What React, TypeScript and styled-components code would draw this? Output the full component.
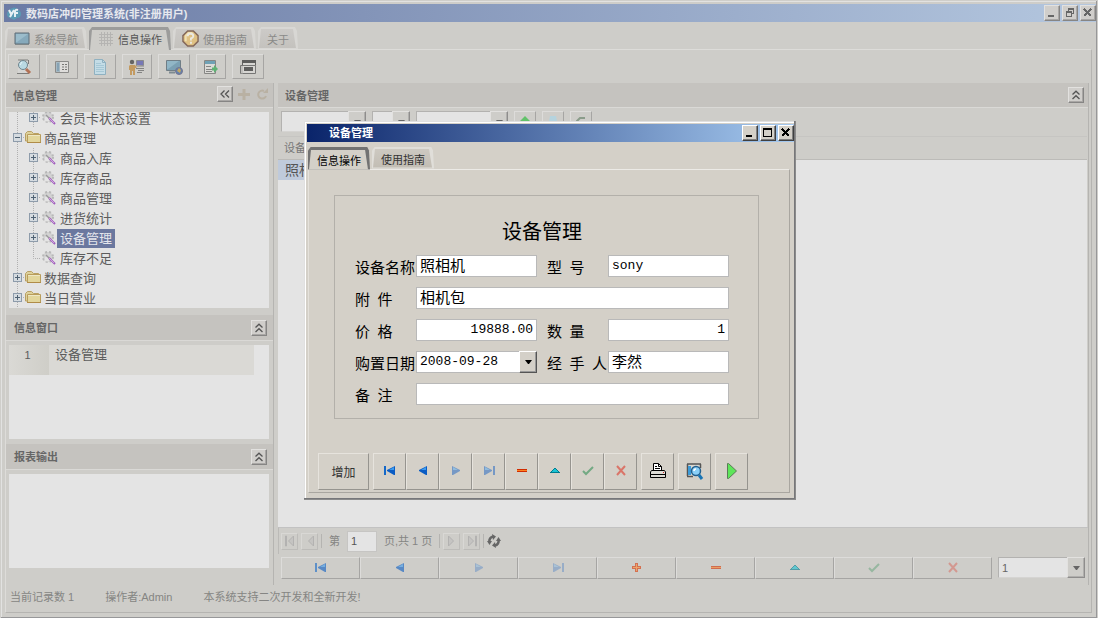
import React from 'react';
import styled, { createGlobalStyle, css } from 'styled-components';

const GlobalStyle = createGlobalStyle`
  *, *::before, *::after { box-sizing: border-box; }
  body {
    margin: 0;
    font-family: "Liberation Sans", "Noto Sans CJK SC", sans-serif;
    font-size: 11px;
    line-height: 16px;
    color: #666;
  }
  button, input, select { font-family: inherit; font-size: inherit; color: inherit; margin: 0; }
  h1, h2, h3, ul { margin: 0; padding: 0; font-weight: normal; }
  ul { list-style: none; }
  svg { display: block; flex: none; }
`;

/* ---------- main window ---------- */

const Desktop = styled.div`
  position: relative;
  min-height: 100vh;
`;

const Shell = styled.div`
  display: flex;
  flex-direction: column;
  min-height: 100vh;
  padding: 4px 2px 6px 4px;
  background: #cecdc9;
  box-shadow: inset 0 0 0 1px #cfceca, inset -2px -2px 0 #979799, inset 2px 2px 0 #e2e2e1;
`;

const TitleBar = styled.header<{ $active?: boolean }>`
  display: flex;
  align-items: center;
  height: 18px;
  gap: 4px;
  padding-left: ${p => (p.$active ? 22 : 2)}px;
  background: ${p =>
    p.$active
      ? 'linear-gradient(90deg, #0a246a, #a6caf0)'
      : 'linear-gradient(90deg, #6b7ba5, #b4c7df)'};
  color: ${p => (p.$active ? '#fff' : '#e6e8ee')};
`;

const WindowTitle = styled.h1`
  flex: 1;
  padding-top: 1px;
  font-size: 11px;
  font-weight: bold;
  line-height: 16px;
`;

const ControlGroup = styled.div`
  display: flex;
  gap: 2px;
`;

const ControlButton = styled.button<{ $active?: boolean }>`
  display: grid;
  place-items: center;
  width: 16px;
  height: 16px;
  padding: 0;
  border: 1px solid;
  border-color: ${p => (p.$active ? '#fff #404040 #404040 #fff' : '#e2e1df #868584 #868584 #e2e1df')};
  background: ${p => (p.$active ? '#d4d0c8' : '#d0cecb')};
  box-shadow: inset -1px -1px 0 ${p => (p.$active ? '#808080' : '#a9a7a5')};
  color: ${p => (p.$active ? '#000' : '#666')};
`;

const Tabs = styled.nav<{ $dialog?: boolean }>`
  display: flex;
  align-items: flex-end;
  gap: 2px;
  height: 27px;
  padding-left: 1px;
`;

const Tab = styled.button<{ $selected?: boolean; $dialog?: boolean }>`
  position: relative;
  isolation: isolate;
  display: flex;
  align-items: center;
  justify-content: center;
  gap: 4px;
  height: ${p => (p.$selected ? 23 : 22)}px;
  margin-bottom: ${p => (p.$selected ? -1 : 0)}px;
  padding: ${p => (p.$dialog ? 3 : 1)}px 9px 0;
  border: 0;
  background: none;
  white-space: nowrap;
  color: ${p => (p.$dialog ? (p.$selected ? '#000' : '#333') : p.$selected ? '#555' : '#8a8a88')};
  &::before, &::after { content: ''; position: absolute; z-index: -1; }
  &::before {
    inset: 0;
    background: ${p => (p.$selected ? (p.$dialog ? '#727272' : '#9c9c9b') : p.$dialog ? '#e0ded9' : '#d8d7d4')};
    clip-path: polygon(0 100%, 0 4px, 3px 0, calc(100% - 3px) 0, calc(100% - 1px) 4px, 100% 100%);
  }
  &::after {
    inset: ${p => (p.$selected ? '3px 2px 0 1px' : '2px 2px 1px 1px')};
    background: ${p =>
      p.$selected ? (p.$dialog ? '#d4d0c8' : '#cecdc9') : p.$dialog ? 'linear-gradient(#cdc9c1, #c2bdb4)' : 'linear-gradient(#cccac7, #c4c2be)'};
    clip-path: polygon(0 100%, 2px 0, calc(100% - 3px) 0, 100% 100%);
  }
`;

const Frame = styled.div`
  display: flex;
  flex: 1;
  flex-direction: column;
  margin: 0 4px 0 1px;
  border: 1px solid;
  border-color: #dddcd9 #b5b4b1 #b5b4b1 #dddcd9;
`;

const Toolbar = styled.div`
  display: flex;
  gap: 6px;
  padding: 4px 2px;
`;

const ToolButton = styled.button<{ $narrow?: boolean }>`
  display: grid;
  place-items: center;
  width: ${p => (p.$narrow ? 30 : 32)}px;
  height: 25px;
  padding: 0;
  border: 1px solid;
  border-color: #dddcda #a6a5a3 #a6a5a3 #dddcda;
  background: #cecdc9;
`;

const Body = styled.main`
  display: grid;
  flex: 1;
  grid-template-columns: 268px minmax(0, 1fr);
  gap: 4px;
  padding-right: 2px;
`;

const Side = styled.aside`
  display: flex;
  flex-direction: column;
  border-right: 1px solid #b5b4b1;
  padding-bottom: 17px;
`;

const PanelHeader = styled.div<{ $tall?: boolean }>`
  display: flex;
  align-items: center;
  justify-content: space-between;
  height: ${p => (p.$tall ? 26 : 25)}px;
  padding: ${p => (p.$tall ? '0 6px 0 8px' : '0 4px 0 7px')};
  border-bottom: 1px solid #dad9d6;
  background: #c5c3bf;
`;

const PanelTitle = styled.h2`
  padding-top: 1px;
  font-size: 11px;
  font-weight: bold;
  line-height: 16px;
  color: #666;
`;

const HeaderTools = styled.div`
  display: flex;
  align-items: center;
  gap: 4px;
  margin-bottom: 2px;
`;

const HeaderIcon = styled.button`
  display: grid;
  place-items: center;
  width: 14px;
  height: 14px;
  padding: 0;
  border: 0;
  background: none;
`;

const PanelBox = styled.div<{ $fill?: boolean }>`
  ${p => (p.$fill ? css`flex: 1;` : css`height: 94px;`)}
  overflow: hidden;
  margin: ${p => (p.$fill ? '4px 4px 7px 3px' : '4px 4px 5px 3px')};
  background: #e4e4e4;
  &:last-child { margin-bottom: 0; }
`;

const Tree = styled.ul`
  margin-top: -4px;
`;

const TreeRow = styled.li`
  display: flex;
  align-items: center;
  height: 20px;
`;

const TreeLabel = styled.span<{ $selected?: boolean }>`
  padding: 0 3px;
  font-size: 13px;
  line-height: 19px;
  color: ${p => (p.$selected ? '#e4e6ec' : '#5c5c5c')};
  background: ${p => (p.$selected ? '#6b789f' : 'transparent')};
`;

const InfoTable = styled.table`
  width: 245px;
  border-collapse: collapse;
  font-size: 13px;
  color: #5c5c5c;
  background: #dad9d5;
`;

const InfoCell = styled.td`
  height: 30px;
  padding: 2px 6px;
  vertical-align: top;
`;

const InfoIndex = styled(InfoCell)`
  width: 40px;
  font-size: 11px;
  padding-right: 9px;
  text-align: center;
  background: linear-gradient(90deg, #dad9d5, #cfcec8);
`;

const Content = styled.section`
  display: flex;
  flex-direction: column;
  border-right: 1px solid #b5b4b1;
`;

const FilterBar = styled.div`
  display: flex;
  gap: 6px;
  height: 28px;
  padding: 3px 3px 4px;
`;

const SelectWrap = styled.span<{ $w: number; $dialog?: boolean }>`
  display: grid;
  flex: none;
  width: ${p => (p.$w ? p.$w + 'px' : 'auto')};
  height: ${p => (p.$dialog ? 22 : 21)}px;
`;

const Select = styled.select<{ $dialog?: boolean }>`
  grid-area: 1 / 1;
  min-width: 0;
  width: 100%;
  padding: ${p => (p.$dialog ? '0 18px 1px 3px' : '0 18px 0 3px')};
  border: 1px solid;
  border-radius: 0;
  border-color: ${p => (p.$dialog ? '#b9b9b9' : '#b3b2b0 #d5d4d2 #d5d4d2 #b3b2b0')};
  background: ${p => (p.$dialog ? '#fff' : '#e4e4e4')};
  color: ${p => (p.$dialog ? '#000' : '#666')};
  appearance: none;
  ${p => p.$dialog && css`font-family: "Liberation Mono", monospace; font-size: 13px;`}
`;

const SelectArrow = styled.span<{ $dialog?: boolean }>`
  grid-area: 1 / 1;
  justify-self: end;
  display: grid;
  place-items: center;
  width: 18px;
  pointer-events: none;
  border: 1px solid;
  border-color: ${p => (p.$dialog ? '#fff #555 #555 #fff' : '#e2e1df #8e8d8c #8e8d8c #e2e1df')};
  background: ${p => (p.$dialog ? '#d4d0c8' : '#cecdc9')};
  box-shadow: inset -1px -1px 0 ${p => (p.$dialog ? '#999' : '#b0afad')};
  color: ${p => (p.$dialog ? '#000' : '#666')};
`;

const FilterButton = styled(ToolButton)`
  width: 22px;
  height: 21px;
`;

const GridArea = styled.div`
  flex: 1;
  margin-right: 1px;
  background: #e4e4e4;
`;

const DataTable = styled.table`
  width: 100%;
  border-collapse: collapse;
`;

const HeadCell = styled.th`
  height: 23px;
  padding: 0 6px;
  text-align: left;
  font-weight: normal;
  color: #777;
  background: #cecdc9;
  border-top: 1px solid #c6c5c2;
  border-bottom: 1px solid #bcbbb8;
`;

const DataCell = styled.td<{ $selected?: boolean }>`
  width: 100px;
  height: 20px;
  padding: 0 7px;
  font-size: 14px;
  line-height: 18px;
  color: #555;
  background: ${p => (p.$selected ? '#bfcadb' : 'transparent')};
`;

const Pager = styled.div`
  display: flex;
  align-items: center;
  gap: 3px;
  height: 27px;
  padding: 0 2px;
  border-top: 1px solid #c2c2c2;
  border-left: 1px solid #bbbab7;
  font-size: 11px;
  color: #858583;
`;

const PagerButton = styled(ToolButton)`
  width: 17px;
  height: 17px;
  border-color: #d9d8d5 #bdbcb9 #bdbcb9 #d9d8d5;
`;

const Divider = styled.span`
  width: 1px;
  height: 14px;
  background: #b5b4b1;
`;

const PageLabel = styled.label`
  display: flex;
  align-items: center;
  gap: 7px;
  padding: 0 4px;
`;

const PageInput = styled.input`
  width: 30px;
  height: 21px;
  padding: 0 3px 1px;
  border: 1px solid #c6c5c3;
  background: #e4e4e4;
  color: #555;
`;

const NavBar = styled.div`
  display: flex;
  gap: 6px;
  padding: 3px 3px 6px;
`;

const NavGroup = styled.div`
  display: grid;
  flex: 1;
  grid-template-columns: repeat(9, minmax(0, 1fr));
`;

const NavButton = styled(ToolButton)`
  width: auto;
  height: 22px;
`;

const StatusBar = styled.footer`
  display: flex;
  gap: 31px;
  height: 27px;
  padding: 4px 4px 0;
  color: #858583;
`;

const Faded = styled.span<{ $disabled?: boolean }>`
  opacity: ${p => (p.$disabled ? 0.32 : 0.6)};
`;

/* ---------- dialog ---------- */

const Overlay = styled.div`
  position: absolute;
  inset: 0;
  display: grid;
  place-items: center;
  padding: 1px 0 0 2px;
`;

const Dialog = styled.section`
  width: 492px;
  padding: 3px 2px 7px 3px;
  background: #d4d0c8;
  box-shadow: inset -1px -1px 0 #8b8b8b, inset -2px -2px 0 #77777a, inset 1px 1px 0 #e0e0e0, inset 2px 2px 0 #fff;
  color: #000;
`;

const DialogFrame = styled.div`
  margin: 0 4px 0 1px;
  padding: 25px 9px 2px;
  border: 1px solid;
  border-color: #eceae6 #a9a6a0 #a9a6a0 #e4e1db;
`;

const Group = styled.fieldset`
  display: grid;
  grid-template-columns: 61px minmax(0, 1fr) 10px 61px minmax(0, 1fr);
  row-gap: 10px;
  margin: 0 21px 34px 16px;
  padding: 24px 29px 13px 20px;
  border: 1px solid #b3b0aa;
`;

const GroupTitle = styled.h3`
  grid-column: 1 / -1;
  font-size: 20px;
  line-height: 25px;
  text-align: center;
`;

const FieldLabel = styled.label<{ $second?: boolean }>`
  grid-column: ${p => (p.$second ? 4 : 1)};
  height: 22px;
  padding-top: 1px;
  font-family: "Noto Sans CJK SC", sans-serif;
  font-size: 15px;
  line-height: 22px;
  white-space: nowrap;
`;

const Field = styled.input<{ $wide?: boolean; $latin?: boolean; $numeric?: boolean }>`
  ${p => p.$wide && css`grid-column: 2 / -1;`}
  width: 100%;
  min-width: 0;
  height: 22px;
  padding: ${p => (p.$latin ? '0 3px' : '0 3px 3px')};
  border: 1px solid #b9b9b9;
  background: #fff;
  color: #000;
  font-size: ${p => (p.$latin ? 13 : 15)}px;
  ${p => p.$latin && css`font-family: "Liberation Mono", monospace;`}
  text-align: ${p => (p.$numeric ? 'right' : 'left')};
`;

const ActionBar = styled.div`
  display: flex;
  gap: 4px;
`;

const ActionGroup = styled.div`
  display: flex;
`;

const ActionButton = styled.button<{ $wide?: boolean }>`
  display: grid;
  place-items: center;
  width: ${p => (p.$wide ? 51 : 33)}px;
  height: 37px;
  padding: 0;
  border: 1px solid;
  border-color: #e6e3dd #96948f #96948f #e6e3dd;
  background: #d4d0c8;
  color: #333;
  font-size: 12px;
`;

const Dim = styled.span<{ $disabled?: boolean }>`
  opacity: ${p => (p.$disabled ? 0.55 : 1)};
`;

/* ---------- glyphs ---------- */

type NavKind = 'first' | 'prev' | 'next' | 'last' | 'add' | 'remove' | 'up' | 'ok' | 'cancel';

function NavIcon({ kind }: { kind: NavKind }) {
  return (
    <svg width="14" height="12" viewBox="0 0 14 12" aria-hidden="true">
      {kind === 'first' && (
        <>
          <path d="M1 1h2v9H1z" fill="#1468c8" />
          <path d="M12 1v9h-1L4 6V5z" fill="#0a5cc4" />
          <path d="M11 2v3H6z" fill="#3c9cf0" />
        </>
      )}
      {kind === 'prev' && (
        <>
          <path d="M11 1v9h-1L3 6V5z" fill="#0a5cc4" />
          <path d="M10 2v3H5z" fill="#3c9cf0" />
        </>
      )}
      {kind === 'next' && (
        <>
          <path d="M3 1v9h1l7-4V5z" fill="#2a6cc4" />
          <path d="M4 2v3h5z" fill="#5cacf0" />
        </>
      )}
      {kind === 'last' && (
        <>
          <path d="M11 1h2v9h-2z" fill="#2a6cc4" />
          <path d="M2 1v9h1l7-4V5z" fill="#2a6cc4" />
          <path d="M3 2v3h5z" fill="#5cacf0" />
        </>
      )}
      {kind === 'add' && (
        <>
          <path d="M5 1h3v3h3v3H8v3H5V7H2V4h3z" fill="#d83400" />
          <path d="M6 2h1v3h3v1H7v3H6V6H3V5h3z" fill="#ff8c30" />
        </>
      )}
      {kind === 'remove' && (
        <>
          <path d="M2 4h10v3H2z" fill="#d02c00" />
          <path d="M2 5h10v1H2z" fill="#ff8020" />
        </>
      )}
      {kind === 'up' && (
        <>
          <path d="M6 3h2v1h1v1h1v1h1v1h1v1H2V7h1V6h1V5h1V4h1z" fill="#007c90" />
          <path d="M6 4h2v1h1v1h1v1H4V6h1V5h1z" fill="#18c4d4" />
        </>
      )}
      {kind === 'ok' && <path d="M2 6l3 3 7-7" fill="none" stroke="#258a4c" strokeWidth="2" />}
      {kind === 'cancel' && <path d="M3 1l8 9M11 1l-8 9" fill="none" stroke="#e02c1c" strokeWidth="2" />}
    </svg>
  );
}

function ControlIcon({ kind }: { kind: 'min' | 'max' | 'restore' | 'close' }) {
  return (
    <svg width="12" height="12" viewBox="0 0 12 12" fill="none" stroke="currentColor" shapeRendering="crispEdges" aria-hidden="true">
      {kind === 'min' && <path d="M2 9h6" strokeWidth="2" />}
      {kind === 'max' && <path d="M1.500 1.500h8v8h-8zM1 2.500h9" />}
      {kind === 'restore' && <path d="M4.500 4V1.500h5v5H8M4 2.500h6M2.500 5.500h5v4h-5zM2 4.500h6" />}
      {kind === 'close' && <path d="M2 2l7 7M9 2l-7 7" strokeWidth="1.500" />}
    </svg>
  );
}

function Chevrons({ left }: { left?: boolean }) {
  return (
    <svg width="10" height="10" viewBox="0 0 10 10" fill="none" stroke="#555" strokeWidth="1.300" aria-hidden="true">
      {left ? <path d="M4.500 1.500L1 5l3.500 3.500M9 1.500L5.500 5 9 8.500" /> : <path d="M1.500 4.500L5 1.200l3.500 3.300M1.500 9L5 5.700 8.500 9" />}
    </svg>
  );
}

function Arrow() {
  return (
    <svg width="7" height="4" viewBox="0 0 7 4" aria-hidden="true">
      <path d="M0 0h7L4 4H3z" fill="currentColor" />
    </svg>
  );
}

function Logo() {
  return (
    <svg width="16" height="14" viewBox="0 0 16 14" aria-hidden="true">
      <path d="M4 12a4 4 0 0 1-3-4 3 3 0 0 1 2-3 5 5 0 0 1 9-1 4 4 0 0 1 3 4c0 2-1 4-4 4l-3 2z" fill="#5a9ab4" />
      <path d="M3 4l2 4M8 4l-4 7M12 4q-3-1-3 2v5M8 7h4" fill="none" stroke="#e6f0f4" strokeWidth="2" />
    </svg>
  );
}

function TabIcon({ kind }: { kind: 'screen' | 'grid' | 'help' }) {
  if (kind === 'screen')
    return (
      <svg width="16" height="14" viewBox="0 0 16 14" aria-hidden="true">
        <path d="M1 1h14v11H1z" fill="#86a9bb" stroke="#5e6c76" />
        <path d="M2 2h12L3 10H2z" fill="#9bbccb" />
        <path d="M1 12.500h14" stroke="#7f8789" />
      </svg>
    );
  if (kind === 'grid')
    return (
      <svg width="16" height="16" viewBox="0 0 16 16" aria-hidden="true">
        <path d="M3.500 1v14M6.500 1v14M9.500 1v14M12.500 1v14M1 3.500h14M1 6.500h14M1 9.500h14M1 12.500h14" stroke="#b5b4b2" />
      </svg>
    );
  return (
    <svg width="17" height="17" viewBox="0 0 18 18" aria-hidden="true">
      <path d="M6 1h6l5 5v6l-5 5H6l-5-5V6z" fill="#dfc184" stroke="#84685a" strokeWidth="1.500" />
      <path d="M4 12V6l3-3h4" fill="none" stroke="#efe0b4" strokeWidth="2" />
      <path d="M6 6.500Q6 4 9 4t3 2.500Q12 8 9.500 9v2M9.500 12.500v2" fill="none" stroke="#ebe9e2" strokeWidth="2" />
    </svg>
  );
}

function ToolIcon({ index }: { index: number }) {
  return (
    <svg width="18" height="18" viewBox="0 0 18 18" aria-hidden="true">
      {index === 0 && (
        <>
          <path d="M3 2h11v14H3z" fill="#d5d5d3" />
          <path d="M3 2h10M13.500 2v4M2 15.500h12" stroke="#7d7d7b" />
          <circle cx="8" cy="7" r="4.500" fill="#b9d9e2" stroke="#6f858d" />
          <path d="M7 4l-2 3" stroke="#e6f4f8" />
          <path d="M11 11l4 4" stroke="#b27155" strokeWidth="3" />
        </>
      )}
      {index === 1 && (
        <>
          <path d="M2.500 3.500h13v11h-13z" fill="#dedddb" stroke="#8b8b89" />
          <path d="M3 4h4v10H3z" fill="#a6b9c3" />
          <path d="M4 6h2M4 8h2M4 10h2M4 12h2" stroke="#668ba4" />
          <path d="M9 6.500h2M12 6.500h2M9 9h2M12 9h2M9 11.500h2M12 11.500h2" stroke="#777775" />
        </>
      )}
      {index === 2 && (
        <>
          <path d="M3.500 1.500h8l3 3v12h-11z" fill="#c4dce6" stroke="#8fb1c1" />
          <path d="M11.500 1.500v3h3" fill="none" stroke="#8fb1c1" />
          <path d="M5 5.500h5M5 7.500h8M5 9.500h8M5 11.500h8M5 13.500h8" stroke="#a6c8d6" />
        </>
      )}
      {index === 3 && (
        <>
          <circle cx="4" cy="4" r="2.200" fill="#656463" />
          <path d="M2 7h5l2 2-1 1H7v7H5v-4H4v4H2v-5H1V8z" fill="#c39a60" />
          <path d="M8.500 2.500h7v5h-7z" fill="#7778b5" stroke="#89898c" />
          <path d="M8 10.500h8M9 14.500h5M10 12.500h6" stroke="#838382" />
          <path d="M9 7l7 1v1H9z" fill="#aaa9a7" />
        </>
      )}
      {index === 4 && (
        <>
          <path d="M1.500 2.500h14v10h-14z" fill="#7ba0b3" stroke="#707e86" />
          <path d="M2 3h12L3 11H2z" fill="#91b6c6" />
          <path d="M4 14.500h6" stroke="#7e8a90" strokeWidth="2" />
          <circle cx="14" cy="13" r="3.500" fill="#6280b0" stroke="#77768c" />
          <path d="M12 13l2-3 2 2-1 3z" fill="#c5a85f" />
        </>
      )}
      {index === 5 && (
        <>
          <path d="M2.500 2.500h11v13h-11z" fill="#dbdad7" stroke="#868684" />
          <path d="M3 3h10v3H3z" fill="#6fa1b5" />
          <path d="M4 8.500h5M4 11.500h6M4 13.500h6" stroke="#858583" />
          <path d="M10 9.500h2V7l4 4-4 4v-2.500h-2z" fill="#5fb173" />
        </>
      )}
      {index === 6 && (
        <>
          <path d="M3.500 2.500h13v5h-13z" fill="#d6d5d2" stroke="#636362" />
          <path d="M3 2h14v3H3z" fill="#5c5c5b" />
          <path d="M1.500 7.500h15v8h-15z" fill="#d6d5d2" stroke="#767675" />
          <path d="M5 9h9v4H5z" fill="#5e5e5d" />
          <path d="M3 8v8" stroke="#aaa9a7" />
        </>
      )}
    </svg>
  );
}

function Branch({ sign, line = 'full' }: { sign?: '+' | '-'; line?: 'full' | 'end' }) {
  return (
    <svg width="16" height="20" viewBox="0 0 16 20" aria-hidden="true">
      <path d={line === 'end' ? 'M8.500 0v10.500H16' : 'M8.500 0v20'} fill="none" stroke="#b0b0b0" strokeDasharray="1 1" />
      {sign && (
        <>
          <path d="M12 9.500h4" stroke="#b0b0b0" strokeDasharray="1 1" />
          <rect x="4.500" y="5.500" width="8" height="8" fill="#d5dbe0" stroke="#8e9cab" />
          <path d={sign === '+' ? 'M6 9.500h5M8.500 7v5' : 'M6 9.500h5'} stroke="#4f6273" />
        </>
      )}
    </svg>
  );
}

function Folder() {
  return (
    <svg width="16" height="16" viewBox="0 0 16 16" aria-hidden="true">
      <path d="M.500 11V3.500l2-2h4l2 2h5l1 1V11z" fill="#ddd09a" stroke="#b8a064" />
      <path d="M2.500 4.500h13v8h-13z" fill="#e2d69c" stroke="#b99d5c" />
      <path d="M3 5.500h12" stroke="#ede7c4" />
      <path d="M2 12.500h14" stroke="#b08c48" />
    </svg>
  );
}

function Gear() {
  return (
    <svg width="16" height="16" viewBox="0 0 16 16" aria-hidden="true">
      <circle cx="7" cy="7" r="5" fill="#d2d2d2" stroke="#b8b8b8" strokeWidth="2" strokeDasharray="2 2" />
      <circle cx="6" cy="9" r="2.500" fill="#e4e4e4" />
      <path d="M5 5l4 4" stroke="#999" strokeWidth="1.500" />
      <path d="M8 8l6 6" stroke="#a160bd" strokeWidth="2" />
      <path d="M8 8l5 5" stroke="#cfa4de" strokeWidth="1" />
    </svg>
  );
}

function PageArrow({ kind }: { kind: 'first' | 'prev' | 'next' | 'last' }) {
  return (
    <svg width="12" height="12" viewBox="0 0 12 12" fill="#c5c4c2" stroke="#b3b2b1" aria-hidden="true">
      {(kind === 'first' || kind === 'prev') && <path d="M9.500 1v10l-5-5z" />}
      {(kind === 'next' || kind === 'last') && <path d="M2.500 1v10l5-5z" />}
      {kind === 'first' && <path d="M1.500 1h1v10h-1z" />}
      {kind === 'last' && <path d="M9.500 1h1v10h-1z" />}
    </svg>
  );
}

function Refresh() {
  return (
    <svg width="14" height="14" viewBox="0 0 14 14" aria-hidden="true">
      <path d="M6 2.500A4.500 4.500 0 0 0 2.500 8M8 11.500A4.500 4.500 0 0 0 11.500 6" fill="none" stroke="#666" strokeWidth="2.500" />
      <path d="M5 0l4 2.500L6 6zM9 14l-4-2.500L8 8zM0 7h5l-2.500 4zM14 7H9l2.500-4z" fill="#666" />
    </svg>
  );
}

function PrintIcon() {
  return (
    <svg width="18" height="18" viewBox="0 0 18 18" aria-hidden="true">
      <path d="M4.500 8V1.500h5l3 3V8" fill="#fff" stroke="#000" />
      <path d="M9.500 1.500v3h3M6 4.500h2M6 6.500h5" fill="none" stroke="#000" />
      <path d="M2.500 8.500h13l1 1.500v5.500h-15V10z" fill="#dedcd6" stroke="#000" />
      <path d="M2 12.500h14" stroke="#000" />
      <path d="M14 10h1v1h-1z" fill="#d02020" />
    </svg>
  );
}

function PreviewIcon() {
  return (
    <svg width="18" height="18" viewBox="0 0 18 18" aria-hidden="true">
      <path d="M1.500 2.500h13v12h-13z" fill="#d9d7d0" />
      <path d="M1 2h14M14.500 2v4M1 14.500h6M1.500 2v12" stroke="#555" strokeWidth="1.500" />
      <path d="M2 4h3v9H2z" fill="#3d9bd8" />
      <circle cx="10" cy="9" r="4.500" fill="#8bd0f8" stroke="#24608e" strokeWidth="1.500" />
      <path d="M8 9q0-2 2-2" fill="none" stroke="#fff" strokeWidth="1.500" />
      <path d="M13 13l3 4" stroke="#1874b4" strokeWidth="3" />
    </svg>
  );
}

function PlayIcon() {
  return (
    <svg width="12" height="16" viewBox="0 0 12 16" aria-hidden="true">
      <path d="M1.500 .500h1l8 7.500-8 7.500h-1z" fill="#5ee65a" stroke="#5c7a58" />
    </svg>
  );
}

/* ---------- data ---------- */

const toolNames = ['查找', '列表', '文档', '用户', '网络', '导出', '打印'];

type Node = { text: string; level: 1 | 2; sign?: '+' | '-'; selected?: boolean };
const nodes: Node[] = [
  { text: '会员卡状态设置', level: 2, sign: '+' },
  { text: '商品管理', level: 1, sign: '-' },
  { text: '商品入库', level: 2, sign: '+' },
  { text: '库存商品', level: 2, sign: '+' },
  { text: '商品管理', level: 2, sign: '+' },
  { text: '进货统计', level: 2, sign: '+' },
  { text: '设备管理', level: 2, sign: '+', selected: true },
  { text: '库存不足', level: 2 },
  { text: '数据查询', level: 1, sign: '+' },
  { text: '当日营业', level: 1, sign: '+' },
];

const mainNav: { kind: NavKind; name: string; disabled?: boolean }[] = [
  { kind: 'first', name: '首条' },
  { kind: 'prev', name: '上一条' },
  { kind: 'next', name: '下一条', disabled: true },
  { kind: 'last', name: '末条', disabled: true },
  { kind: 'add', name: '新增' },
  { kind: 'remove', name: '删除' },
  { kind: 'up', name: '编辑' },
  { kind: 'ok', name: '保存', disabled: true },
  { kind: 'cancel', name: '取消', disabled: true },
];

function DropDown({ id, width, value, dialog }: { id: string; width: number; value: string; dialog?: boolean }) {
  return (
    <SelectWrap $w={width} $dialog={dialog}>
      <Select id={id} $dialog={dialog} aria-label={dialog ? undefined : id}>
        <option>{value}</option>
      </Select>
      <SelectArrow $dialog={dialog}><Arrow /></SelectArrow>
    </SelectWrap>
  );
}

function CollapsePanel({ title }: { title: string }) {
  return (
    <PanelHeader $tall>
      <PanelTitle>{title}</PanelTitle>
      <ControlButton aria-label="折叠"><Chevrons /></ControlButton>
    </PanelHeader>
  );
}

function EquipmentDialog() {
  return (
    <Dialog role="dialog" aria-label="设备管理">
      <TitleBar $active>
        <WindowTitle as="h2">设备管理</WindowTitle>
        <ControlGroup>
          <ControlButton $active aria-label="最小化"><ControlIcon kind="min" /></ControlButton>
          <ControlButton $active aria-label="最大化"><ControlIcon kind="max" /></ControlButton>
          <ControlButton $active aria-label="关闭"><ControlIcon kind="close" /></ControlButton>
        </ControlGroup>
      </TitleBar>
      <Tabs>
        <Tab $dialog $selected>信息操作</Tab>
        <Tab $dialog>使用指南</Tab>
      </Tabs>
      <DialogFrame>
        <Group>
          <GroupTitle>设备管理</GroupTitle>
          <FieldLabel htmlFor="name">设备名称</FieldLabel>
          <Field id="name" defaultValue="照相机" />
          <FieldLabel $second htmlFor="model">{'型\u2002号'}</FieldLabel>
          <Field id="model" $latin defaultValue="sony" />
          <FieldLabel htmlFor="parts">{'附\u2002件'}</FieldLabel>
          <Field id="parts" $wide defaultValue="相机包" />
          <FieldLabel htmlFor="price">{'价\u2002格'}</FieldLabel>
          <Field id="price" $latin $numeric defaultValue="19888.00" />
          <FieldLabel $second htmlFor="count">{'数\u2002量'}</FieldLabel>
          <Field id="count" $latin $numeric defaultValue="1" />
          <FieldLabel htmlFor="date">购置日期</FieldLabel>
          <DropDown id="date" width={0} value="2008-09-28" dialog />
          <FieldLabel $second htmlFor="owner">{'经\u2002手\u2002人'}</FieldLabel>
          <Field id="owner" defaultValue="李然" />
          <FieldLabel htmlFor="note">{'备\u2002注'}</FieldLabel>
          <Field id="note" $wide />
        </Group>
        <ActionBar>
          <ActionButton $wide>增加</ActionButton>
          <ActionGroup>
            {mainNav.filter(n => n.kind !== 'add').map(n => (
              <ActionButton key={n.kind} aria-label={n.name}>
                <Dim $disabled={n.disabled}><NavIcon kind={n.kind} /></Dim>
              </ActionButton>
            ))}
          </ActionGroup>
          <ActionButton aria-label="打印"><PrintIcon /></ActionButton>
          <ActionButton aria-label="预览"><PreviewIcon /></ActionButton>
          <ActionButton aria-label="执行"><PlayIcon /></ActionButton>
        </ActionBar>
      </DialogFrame>
    </Dialog>
  );
}

export default function App() {
  return (
    <Desktop>
      <GlobalStyle />
      <Shell>
        <TitleBar>
          <Logo />
          <WindowTitle>数码店冲印管理系统(非注册用户)</WindowTitle>
          <ControlGroup>
            <ControlButton aria-label="最小化"><ControlIcon kind="min" /></ControlButton>
            <ControlButton aria-label="还原"><ControlIcon kind="restore" /></ControlButton>
            <ControlButton aria-label="关闭"><ControlIcon kind="close" /></ControlButton>
          </ControlGroup>
        </TitleBar>
        <Tabs>
          <Tab><TabIcon kind="screen" />系统导航</Tab>
          <Tab $selected><TabIcon kind="grid" />信息操作</Tab>
          <Tab><TabIcon kind="help" />使用指南</Tab>
          <Tab>关于</Tab>
        </Tabs>
        <Frame>
          <Toolbar>
            {toolNames.map((name, i) => (
              <ToolButton key={name} aria-label={name} $narrow={i === 3 || i === 5}>
                <ToolIcon index={i} />
              </ToolButton>
            ))}
          </Toolbar>
          <Body>
            <Side>
              <PanelHeader>
                <PanelTitle>信息管理</PanelTitle>
                <HeaderTools>
                  <ControlButton aria-label="收起"><Chevrons left /></ControlButton>
                  <HeaderIcon aria-label="添加">
                    <svg width="12" height="12" viewBox="0 0 12 12"><path d="M6 1v11M0 6.500h12" stroke="#b9b1a3" strokeWidth="3" /></svg>
                  </HeaderIcon>
                  <HeaderIcon aria-label="刷新">
                    <svg width="12" height="12" viewBox="0 0 12 12">
                      <path d="M8 3a4 4 0 1 0 2 5" fill="none" stroke="#b9b1a3" strokeWidth="2" />
                      <path d="M7 5h5V0z" fill="#b9b1a3" />
                    </svg>
                  </HeaderIcon>
                </HeaderTools>
              </PanelHeader>
              <PanelBox $fill>
                <Tree>
                  {nodes.map((n, i) => (
                    <TreeRow key={i}>
                      {n.level === 2 && <Branch />}
                      <Branch sign={n.sign} line={n.sign ? 'full' : 'end'} />
                      {n.level === 1 ? <Folder /> : <Gear />}
                      <TreeLabel $selected={n.selected}>{n.text}</TreeLabel>
                    </TreeRow>
                  ))}
                </Tree>
              </PanelBox>
              <CollapsePanel title="信息窗口" />
              <PanelBox>
                <InfoTable>
                  <tbody>
                    <tr>
                      <InfoIndex>1</InfoIndex>
                      <InfoCell>设备管理</InfoCell>
                    </tr>
                  </tbody>
                </InfoTable>
              </PanelBox>
              <CollapsePanel title="报表输出" />
              <PanelBox />
            </Side>
            <Content>
              <PanelHeader>
                <PanelTitle>设备管理</PanelTitle>
                <ControlButton aria-label="折叠"><Chevrons /></ControlButton>
              </PanelHeader>
              <FilterBar>
                <DropDown id="字段" width={85} value="" />
                <DropDown id="条件" width={38} value="" />
                <DropDown id="内容" width={92} value="" />
                <FilterButton aria-label="添加条件">
                  <svg width="12" height="12" viewBox="0 0 12 12"><path d="M6 0l5 5H8v6H4V5H1z" fill="#62c26a" /></svg>
                </FilterButton>
                <FilterButton aria-label="查询">
                  <svg width="12" height="12" viewBox="0 0 12 12"><path d="M3 0h6l1 5-4 6-4-6z" fill="#b5d3de" /></svg>
                </FilterButton>
                <FilterButton aria-label="刷新">
                  <svg width="12" height="12" viewBox="0 0 12 12">
                    <path d="M2 9V5l3-3h5" fill="none" stroke="#8a9c8a" strokeWidth="2" />
                  </svg>
                </FilterButton>
              </FilterBar>
              <GridArea>
                <DataTable>
                  <thead>
                    <tr><HeadCell>设备名称</HeadCell><HeadCell /></tr>
                  </thead>
                  <tbody>
                    <tr><DataCell $selected>照相机</DataCell><DataCell /></tr>
                  </tbody>
                </DataTable>
              </GridArea>
              <Pager>
                <PagerButton aria-label="首页"><PageArrow kind="first" /></PagerButton>
                <PagerButton aria-label="上一页"><PageArrow kind="prev" /></PagerButton>
                <Divider />
                <PageLabel>
                  第
                  <PageInput defaultValue="1" />
                  页,共 1 页
                </PageLabel>
                <Divider />
                <PagerButton aria-label="下一页"><PageArrow kind="next" /></PagerButton>
                <PagerButton aria-label="末页"><PageArrow kind="last" /></PagerButton>
                <Divider />
                <HeaderIcon aria-label="刷新"><Refresh /></HeaderIcon>
              </Pager>
              <NavBar>
                <NavGroup>
                  {mainNav.map(n => (
                    <NavButton key={n.kind} aria-label={n.name}>
                      <Faded $disabled={n.disabled}><NavIcon kind={n.kind} /></Faded>
                    </NavButton>
                  ))}
                </NavGroup>
                <DropDown id="页码" width={87} value="1" />
              </NavBar>
            </Content>
          </Body>
          <StatusBar>
            <span>当前记录数 1</span>
            <span>操作者:Admin</span>
            <span>本系统支持二次开发和全新开发!</span>
          </StatusBar>
        </Frame>
      </Shell>
      <Overlay>
        <EquipmentDialog />
      </Overlay>
    </Desktop>
  );
}
